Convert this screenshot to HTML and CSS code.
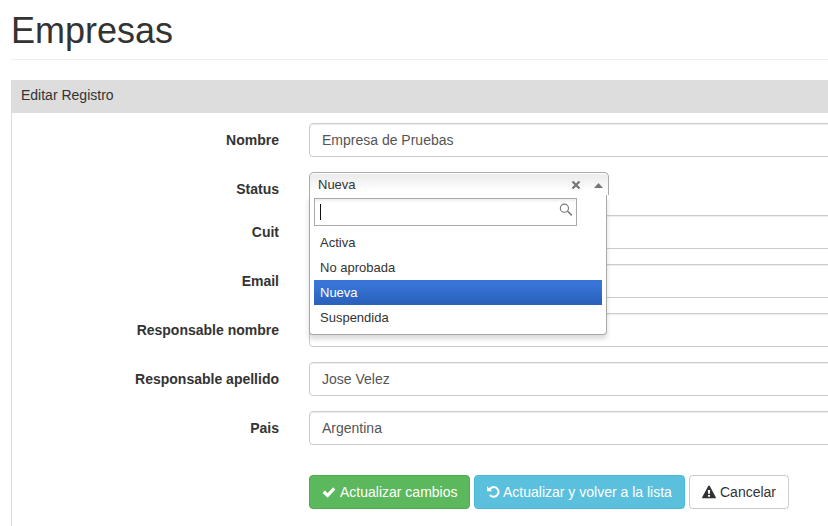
FILE: index.html
```html
<!DOCTYPE html>
<html lang="es">
<head>
<meta charset="utf-8">
<title>Empresas</title>
<link rel="stylesheet" href="styles.css">
</head>
<body>
<header class="page-header"><h1>Empresas</h1></header>
<section class="panel">
  <div class="panel-heading">Editar Registro</div>
  <form class="panel-body">
    <div class="row"><label>Nombre</label><div class="control">Empresa de Pruebas</div></div>
    <div class="row row-select">
      <label>Status</label>
      <div class="chosen">
        <div class="chosen-single">
          <span>Nueva</span>
          <svg class="clear" width="10" height="10" viewBox="0 0 10 10"><path d="M1.5 1.5l7 7M8.5 1.5l-7 7"/></svg>
          <svg class="arrow" width="9" height="5" viewBox="0 0 9 5"><path d="M4.5 0L9 5H0z"/></svg>
        </div>
        <div class="chosen-drop">
          <div class="search">
            <span class="caret"></span>
            <svg width="14" height="14" viewBox="0 0 14 14"><circle cx="5.4" cy="5.2" r="4.1"/><path d="M8.4 8l4.4 4.4"/></svg>
          </div>
          <ul>
            <li>Activa</li>
            <li>No aprobada</li>
            <li class="highlighted">Nueva</li>
            <li>Suspendida</li>
          </ul>
        </div>
      </div>
    </div>
    <div class="row"><label>Cuit</label><div class="control"></div></div>
    <div class="row"><label>Email</label><div class="control"></div></div>
    <div class="row"><label>Responsable nombre</label><div class="control"></div></div>
    <div class="row"><label>Responsable apellido</label><div class="control">Jose Velez</div></div>
    <div class="row"><label>Pais</label><div class="control">Argentina</div></div>
    <div class="actions">
      <button type="button" class="btn btn-success"><svg width="14" height="14" viewBox="0 0 14 14"><path d="M.6 7.9L2.9 5.6 5.6 8.2 11.1 2.3 13.4 4.6 5.6 12.7z"/></svg>Actualizar cambios</button>
      <button type="button" class="btn btn-info"><svg width="13" height="14" viewBox="0 0 13 14"><path class="stroke" d="M2.6 4.2C4.1 2.7 5.4 2.1 6.8 2.1a4.8 4.8 0 1 1-3.9 7.7"/><path d="M0 1.2V6.2H5.2z"/></svg>Actualizar y volver a la lista</button>
      <button type="button" class="btn btn-default"><svg width="14" height="14" viewBox="0 0 14 14"><path fill-rule="evenodd" d="M7 .4q.5 0 .8.6l6 11.2q.4 1-.6 1.1H.8q-1-.1-.6-1.1l6-11.2q.3-.6.8-.6zM5.8 5l.5 4h1.4l.5-4zM6 10v1.8h2V10z"/></svg>Cancelar</button>
    </div>
  </form>
</section>
</body>
</html>
```
FILE: styles.css
```css
* { box-sizing: border-box; }
html { overflow: hidden; }
body {
  margin: 0;
  padding: 10px 0 0 11px;
  background: #fff;
  color: #333;
  font: 14px/20px "Liberation Sans", Arial, sans-serif;
}
.page-header {
  height: 50px;
  margin-bottom: 20px;
  border-bottom: 1px solid #eee;
}
h1 { margin: 0; font-size: 36px; line-height: 42px; font-weight: 500; }
.panel { height: 446px; border-left: 1px solid #ddd; }
.panel-heading {
  height: 33px;
  margin-left: -1px;
  padding: 5px 10px;
  background: #ddd;
}
.panel-body { display: flex; flex-direction: column; gap: 15px; padding-top: 10px; }
.row { display: grid; grid-template-columns: 267px 560px; column-gap: 30px; height: 34px; }
.row-select { height: 28px; }
label { padding-top: 7px; text-align: right; font-weight: bold; }
.control {
  height: 34px;
  padding: 6px 12px;
  border: 1px solid #ccc;
  border-radius: 4px;
  box-shadow: inset 0 1px 1px rgba(0, 0, 0, .075);
  color: #555;
}
.chosen { position: relative; width: 300px; font-size: 13px; color: #333; }
.chosen-single {
  display: flex;
  align-items: center;
  height: 23px;
  padding: 0 5px 0 8px;
  border: 1px solid #aaa;
  border-bottom: 0;
  border-radius: 5px 5px 0 0;
  background: linear-gradient(#eee 20%, #fff 80%);
  box-shadow: inset 0 1px 0 #fff;
}
.chosen-single span { flex: 1; padding-top: 2px; }
.clear { margin: 2px 13px 0 0; fill: none; stroke: #777; stroke-width: 2.3; }
.arrow { margin-top: 3px; fill: #777; }
.chosen-drop {
  position: absolute;
  top: 23px;
  left: 0;
  z-index: 10;
  width: 298px;
  height: 140px;
  padding: 3px 4px;
  border: 1px solid #aaa;
  border-top: 0;
  border-radius: 0 0 4px 4px;
  background: #fff;
  box-shadow: 0 4px 5px rgba(0, 0, 0, .15);
}
.search {
  display: flex;
  justify-content: space-between;
  width: 263px;
  height: 28px;
  padding: 4px 3px 0 5px;
  border: 1px solid #aaa;
  background: linear-gradient(#eee 1%, #fff 15%);
}
.caret { width: 1px; height: 16px; margin-top: 1px; background: #111; }
.search svg { fill: none; stroke: #777; stroke-width: 1.1; }
.search svg path { stroke-width: 1.5; }
ul { margin: 4px 0 0; padding: 0; list-style: none; }
li { height: 25px; padding: 0 6px; line-height: 25px; }
.highlighted { color: #fff; background: linear-gradient(#3875d7 20%, #2a62bc 90%); }
.actions { display: flex; gap: 4px; margin: 15px 0 0 297px; }
.btn {
  display: flex;
  align-items: center;
  gap: 4px;
  height: 34px;
  padding: 0 11px 0 12px;
  border: 1px solid;
  border-radius: 4px;
  font: inherit;
  white-space: nowrap;
}
.btn svg { flex: none; fill: currentColor; }
.btn .stroke { fill: none; stroke: currentColor; stroke-width: 2; }
.btn-success { width: 161px; color: #fff; background: #5cb85c; border-color: #4cae4c; }
.btn-info { width: 211px; gap: 3px; color: #fff; background: #5bc0de; border-color: #46b8da; }
.btn-default { width: 100px; color: #333; background: #fff; border-color: #ccc; }
```
